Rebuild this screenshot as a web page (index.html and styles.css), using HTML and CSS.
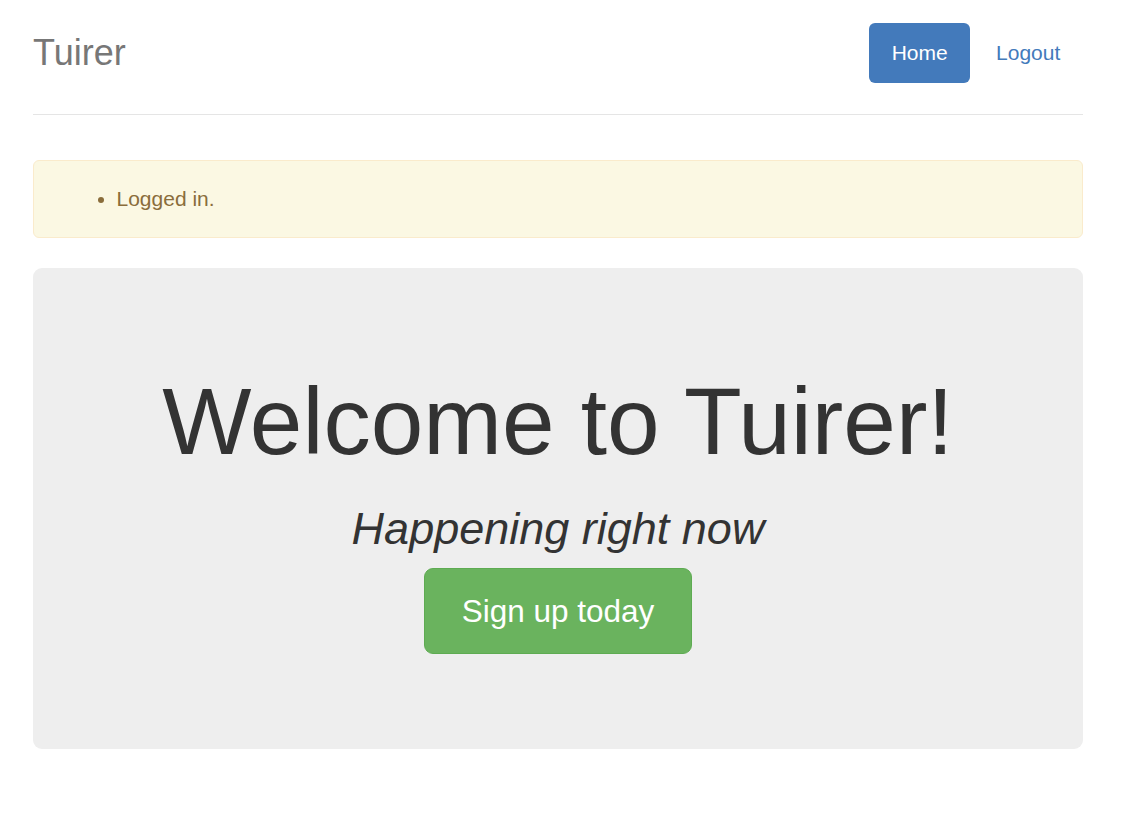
FILE: index.html
```html
<!DOCTYPE html>
<html lang="en">
<head>
<meta charset="utf-8">
<title>Tuirer</title>
<link rel="stylesheet" href="styles.css">
</head>
<body>
<div class="container">
  <header class="header">
    <h3 class="brand">Tuirer</h3>
    <nav class="nav">
      <a class="pill active" href="#">Home</a>
      <a class="pill" href="#">Logout</a>
    </nav>
  </header>
  <div class="alert">
    <ul class="alert-list">
      <li>Logged in.</li>
    </ul>
  </div>
  <div class="jumbotron">
    <h1 class="title">Welcome to Tuirer!</h1>
    <h2 class="subtitle">Happening right now</h2>
    <p class="cta"><a class="btn" href="#">Sign up today</a></p>
  </div>
</div>
</body>
</html>
```
FILE: styles.css
```css
html, body {
  margin: 0;
  padding: 0;
  background: #fff;
}
body {
  font-family: "Liberation Sans", Arial, sans-serif;
  color: #333;
  padding-top: 23px;
}
.container {
  width: 1050px;
  margin-left: 33px;
}
.header {
  display: flex;
  justify-content: space-between;
  align-items: flex-start;
  padding-bottom: 31px;
  border-bottom: 1px solid #e5e5e5;
  margin-bottom: 45px;
}
.brand {
  margin: 0;
  font-size: 36px;
  font-weight: normal;
  line-height: 60px;
  color: #777;
}
.nav {
  display: flex;
  gap: 3px;
}
.pill {
  display: block;
  padding: 15px 22.7px;
  font-size: 21px;
  line-height: 30px;
  color: #437abb;
  text-decoration: none;
  border-radius: 6px;
}
.pill.active {
  background: #437abb;
  color: #fff;
}
.alert {
  background: #fbf8e3;
  border: 1px solid #faebcc;
  border-radius: 6px;
  padding: 23px 22.5px;
  color: #8a6d3b;
  font-size: 21px;
  line-height: 30px;
  margin-bottom: 30px;
}
.alert-list {
  margin: 0;
  padding-left: 60px;
}
.jumbotron {
  background: #eeeeee;
  border-radius: 9px;
  padding: 72px 0;
  text-align: center;
}
.title {
  margin: 30px 0 15px;
  font-size: 94.5px;
  line-height: 1.1;
  font-weight: normal;
  color: #333;
}
.subtitle {
  margin: 30px 0 15px;
  font-size: 45px;
  line-height: 1.1;
  font-weight: normal;
  font-style: italic;
  color: #333;
}
.cta {
  display: flex;
  justify-content: center;
  margin: 0 0 22.5px;
}
.btn {
  display: block;
  padding: 21px 36.5px;
  font-size: 31.5px;
  line-height: 42px;
  color: #fff;
  background: #6ab35e;
  border: 1.5px solid #5eab52;
  border-radius: 9px;
  text-decoration: none;
}
```
